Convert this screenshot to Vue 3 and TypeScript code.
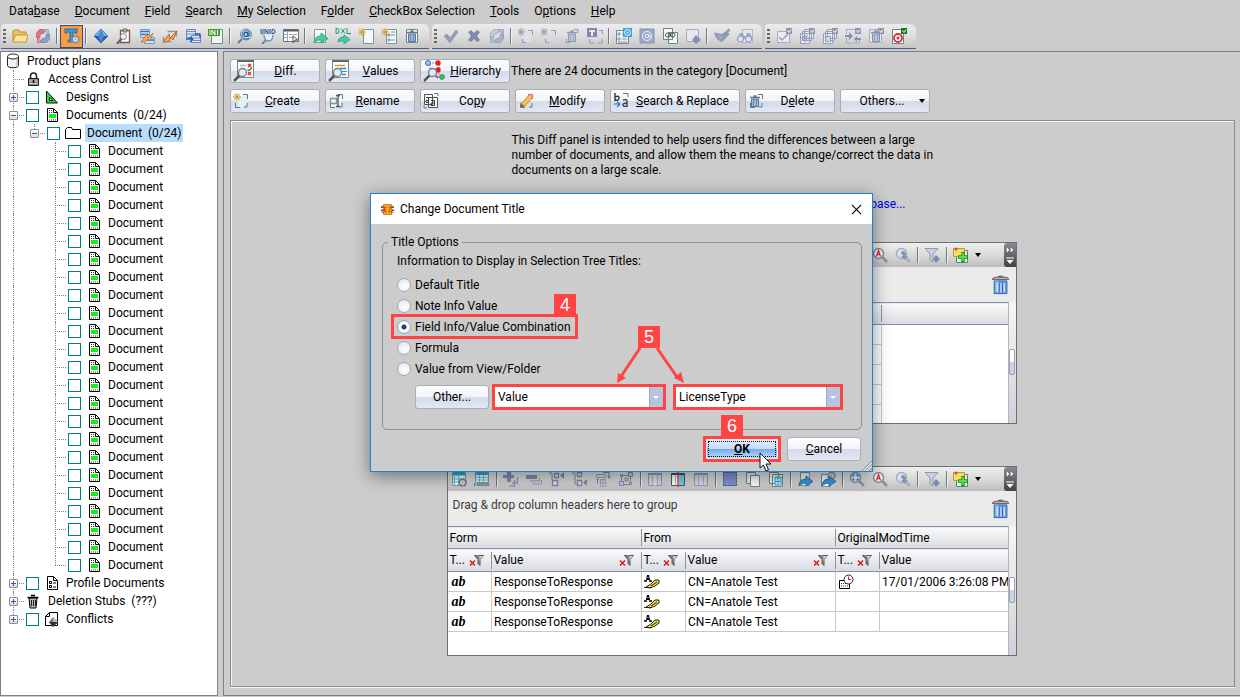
<script setup lang="ts">
import { ref } from 'vue'

type Guide = 'line' | 'blank' | 'tee' | 'end'

interface TreeRow {
  label: string
  icon: string
  guides: Guide[]
  expander?: 'plus' | 'minus'
  checkbox?: boolean
  selected?: boolean
}

interface ActionButton {
  label: string
  icon: string
}

const menus = ['Data&base', '&Document', '&Field', '&Search', '&My Selection', 'F&older', '&CheckBox Selection', '&Tools', 'O&ptions', '&Help']

const toolbars: string[][] = [
  ['folder', 'reload', '|', 'title', '|', 'diamond', 'clipboard', 'editLines', 'editPen', 'transfer', 'iniFile', '|', 'atSearch', 'unid', 'window', '|', 'export', 'dxl', 'newDoc', 'newForm', 'trashDoc'],
  ['check', 'cross', 'reloadOff', '|', 'newOff', 'newOff2', 'trashOff', 'titleOff', '|', 'formAt', 'atOff', 'linkDoc', 'conflictOff', '|', 'broom', 'binoculars'],
  ['checkDoc', 'stackStar', 'stackDash', 'collapseDoc', 'trashCheck', 'target'],
]

const gridTools = ['tableGear', 'tableRow', '|', 'plus', 'minus', 'treeUp', 'treeDown', 'columns', 'nodes', '|', 'cols1', 'cols2', 'cols3', '|', 'selectAll', 'copy', 'copyTable', '|', 'share', 'shareGear', '|', 'zoomFit', 'zoomText', 'zoomNext', '|', 'filter', '|', 'noteAdd']

const firstRow: ActionButton[] = [
  { label: '&Diff.', icon: 'diffBig' },
  { label: '&Values', icon: 'valuesBig' },
  { label: '&Hierarchy', icon: 'hierBig' },
]

const secondRow: ActionButton[] = [
  { label: '&Create', icon: 'create' },
  { label: '&Rename', icon: 'rename' },
  { label: 'Co&py', icon: 'copyText' },
  { label: '&Modify', icon: 'modify' },
  { label: '&Search & Replace', icon: 'replace' },
  { label: 'D&elete', icon: 'deleteDoc' },
]

const tree: TreeRow[] = [
  { label: 'Product plans', icon: 'database', guides: [] },
  { label: 'Access Control List', icon: 'lock', guides: ['tee'] },
  { label: 'Designs', icon: 'design', guides: ['tee'], expander: 'plus', checkbox: true },
  { label: 'Documents  (0/24)', icon: 'document', guides: ['tee'], expander: 'minus', checkbox: true },
  { label: 'Document  (0/24)', icon: 'category', guides: ['line', 'end'], expander: 'minus', checkbox: true, selected: true },
  ...Array.from({ length: 24 }, (_, i): TreeRow => ({
    label: 'Document',
    icon: 'document',
    guides: ['line', 'blank', i === 23 ? 'end' : 'tee'],
    checkbox: true,
  })),
  { label: 'Profile Documents', icon: 'profile', guides: ['tee'], expander: 'plus', checkbox: true },
  { label: 'Deletion Stubs  (???)', icon: 'bin', guides: ['tee'], expander: 'plus' },
  { label: 'Conflicts', icon: 'conflict', guides: ['end'], expander: 'plus', checkbox: true },
]

const rows = [
  { form: 'ResponseToResponse', from: 'CN=Anatole Test', time: '17/01/2006 3:26:08 PM' },
  { form: 'ResponseToResponse', from: 'CN=Anatole Test', time: '' },
  { form: 'ResponseToResponse', from: 'CN=Anatole Test', time: '' },
]

const titleOptions = ['Default Title', 'Note Info Value', 'Field Info/Value Combination', 'Formula', 'Value from View/Folder']
const chosen = ref('Field Info/Value Combination')
const infoKind = ref('Value')
const fieldName = ref('LicenseType')

function mnemonic(label: string): [string, string, string] {
  const at = label.search(/&\S/)
  return at < 0 ? [label, '', ''] : [label.slice(0, at), label[at + 1], label.slice(at + 2)]
}

const off = '#8f99b6'
const page = (stroke: string, fill = '#f4f8f8') =>
  `<path d="M2.500 1.500h11v13h-11z" fill="${fill}" stroke="${stroke}"/>`
const star = (c: string, x = 4, y = 4) =>
  `<path d="M${x} ${y - 4}v8M${x - 4} ${y}h8M${x - 3} ${y - 3}l6 6M${x + 3} ${y - 3}l-6 6" stroke="${c}" stroke-width="1"/>`
const lens = (rim: string, fill = '#e9f1fb') =>
  `<path d="M10 10l5 5" stroke="${rim}" stroke-width="2.500"/><circle cx="6.500" cy="6.500" r="5" fill="${fill}" stroke="${rim}" stroke-width="1.500"/>`
const bin = (c: string, f: string, x = 0, y = 0) =>
  `<g transform="translate(${x} ${y})"><path d="M4.500 6h7v7.500h-7z" fill="${f}" stroke="${c}"/><path d="M3 4.500h10M6.500 3h3" stroke="${c}" stroke-width="1.500"/><path d="M6.500 7v6M9.500 7v6" stroke="${c}" stroke-width=".7"/></g>`
const arrow = (c: string, d: string) =>
  `<path d="M2 15c0-5 3-7 7-7V5l7 5.500L9 15v-3c-3 0-5 1-7 3z" fill="${c}" stroke="${d}" stroke-width=".8"/>`
const badge = (c: string) =>
  `<path d="M10 0h6v6h-6z" fill="${c}"/><path d="M11.500 2.500l1.500 2 2-3" stroke="#fff" fill="none"/>`
const gear = (c: string, x: number, y: number) =>
  `<circle cx="${x}" cy="${y}" r="3" fill="#eef1f5" stroke="${c}" stroke-width="1.300"/><circle cx="${x}" cy="${y}" r="4" fill="none" stroke="${c}" stroke-width="1.300" stroke-dasharray="1.500 1.640"/><circle cx="${x}" cy="${y}" r="1" fill="${c}"/>`
const corners = '<path d="M10 1.500h4.500V6M2.500 10v4.500H7M14 10v4h-3" fill="none" stroke="#5a7c80"/>'
const funnel = (c: string, f: string) =>
  `<path d="M1 1.500h13L9 7v8l-3-2V7z" fill="${f}" stroke="${c}"/>`
const bigLens = '<path d="M1 21l6-6" stroke="#555" stroke-width="2.500"/><circle cx="9.500" cy="12.500" r="4" fill="#dcebfa" fill-opacity=".9" stroke="#777f88" stroke-width="1.300"/>'
const tableCols = (hi: string) =>
  `<path d="M1.500 2.500h13v12h-13z" fill="#d3d8e6" stroke="${off}"/><path d="M1 3h14" stroke="${off}" stroke-width="2"/><path d="M5.500 3v11M10.500 3v11" stroke="#a9b2c9"/>${hi}`

const icons: Record<string, string> = {
  folder: '<path d="M1 13V3l2-1h4l1 2h6v4" fill="#ecc260" stroke="#bd8e31"/><path d="M3.500 7H16l-2 7H1z" fill="#ffe39a" stroke="#c59a3c"/>',
  reload: '<path d="M1.500 9.500V5l3-3.500h4l2 2L8 5.500H6.500L5 7.500v2z" fill="#e27681" stroke="#ad3d4c" stroke-width=".6"/><path d="M8.500 1.500h5v5z" fill="#b7c5db" stroke="#6f89b2" stroke-width=".6"/><path d="M14.500 6.500V11l-3 3.500h-4l-2-2L8 10.500h1.500l1.500-2v-2z" fill="#8ba3c8" stroke="#53719f" stroke-width=".6"/><path d="M7.500 14.500h-5v-5z" fill="#e3949d" stroke="#b5525f" stroke-width=".6"/>',
  title: '<path d="M1 1h12v4h-2V4H9v8h2v2H4v-2h2V4H3v1H1z" fill="#3c9ae2" stroke="#1c619f" stroke-width=".8"/>' + gear('#8491a2', 11.5, 11.5),
  diamond: '<path d="M8 1l7 7H1z" fill="#78b4f0"/><path d="M1 8h14l-7 7z" fill="#2458a8"/><path d="M8 1L5 8l3 7 3-7z" fill="#4e88d2"/><path d="M8 1l7 7-7 7-7-7z" fill="none" stroke="#2a559a" stroke-width=".6"/>',
  clipboard: '<path d="M4.500 2.500h9v12h-9z" fill="#fffaf8" stroke="#7b5550" stroke-width="1.300"/><path d="M7 1h4v3H7z" fill="#b9a7a4" stroke="#775"/><path d="M1 16l5-6" stroke="#665a62" stroke-width="2"/><circle cx="7.500" cy="8.500" r="3" fill="#eaf2fb" stroke="#80878f"/>',
  editLines: '<path d="M1.500 1.500h9v8h-9z" fill="#d8e6f8" stroke="#7b97c4"/><path d="M2 3.500h8M2 6.500h8" stroke="#3e6cb2" stroke-width="1.500"/><path d="M5.500 9.500h10v6h-10z" fill="#cfdff5" stroke="#7b97c4"/><path d="M6 12h9" stroke="#3e6cb2" stroke-width="1.500"/><path d="M2 14l6-8 1 4 5-5-3 8-2-2-3 3z" fill="#f5a84c" stroke="#b06c25" stroke-width=".7"/>',
  editPen: '<path d="M5.500 3.500h9v5M1.500 8.500v5h8" fill="none" stroke="#8895ab" stroke-width="1.300"/><path d="M1 14l6-8 1 4 7-7-4 9-2-2-4 4z" fill="#f5a84c" stroke="#a85516" stroke-width=".8"/>',
  transfer: '<path d="M1.500 1.500h9v8h-9z" fill="#d8e6f8" stroke="#6b87b8"/><path d="M2 3.500h8M2 6h8" stroke="#6a8dc4"/><path d="M6.500 7.500h9v7h-9z" fill="#dfeafa" stroke="#6b87b8"/><path d="M1 11h6M5 9l3 2-3 3M10 6h5v4" stroke="#2257bd" stroke-width="1.300" fill="none"/><path d="M7 10h8M7 12.500h8" stroke="#6a8dc4"/>',
  iniFile: '<path d="M3.500 1.500h11v14h-11z" fill="#eef6f0" stroke="#6f9080"/><path d="M0 1h12v7H0z" fill="#3f9a2c"/><path d="M2 2v5M4 7V2l3 5V2M9.500 2v5" stroke="#fff" fill="none"/>',
  atSearch: '<path d="M1 15l4-4" stroke="#6a7988" stroke-width="2"/><circle cx="9" cy="6.500" r="5.500" fill="#e3eef8" stroke="#5c87b0"/><circle cx="9" cy="6.500" r="2" fill="none" stroke="#1a5294" stroke-width="1.300"/><path d="M11 4v4c1 1 2 0 2-2 0-5-8-4-8 1 0 4 5 5 7 3" fill="none" stroke="#1a5294"/>',
  unid: '<path d="M2 16l4-4" stroke="#6a7988" stroke-width="1.700"/><path d="M4 7c0 8 9 8 9 0" fill="#e4effa" stroke="#6790b6" stroke-width="1.300"/><path d="M1 1v4q0 1 1 1t1-1V1M5 6V1l3 5V1M10 1v5M12 1.500v4h1q2 0 2-2t-2-2z" fill="none" stroke="#175694"/>',
  window: '<path d="M.5 1.500h15v12H.5z" fill="#f8fafc" stroke="#69727e"/><path d="M1 2.500h14" stroke="#57616f" stroke-width="2"/><path d="M4.500 4v9M1 6.500h3M1 9.500h3M6 6.500h8M6 9.500h4" stroke="#a0a9b4"/><path d="M10 8l5 4h-3l-2 3z" fill="#fff" stroke="#555"/>',
  export: page('#8a9a96') + arrow('#46cda8', '#1f9f80'),
  dxl: '<path d="M1 .5v5h1q2 0 2-2.500T2 .5zM6 .5l4 5M10 .5l-4 5M12 0v5.500h4" fill="none" stroke="#169a7c"/><path d="M3 14c0-4 3-5 6-5V7l6 4.500L9 16v-3c-3 0-4 0-6 1z" fill="#46cda8" stroke="#1f9f80" stroke-width=".8"/>',
  newDoc: '<path d="M5.500 1.500h10v14h-10z" fill="#f4fafa" stroke="#7a9894"/>' + star('#d4a017'),
  newForm: '<path d="M5.500 1.500h10v14h-10z" fill="#f4fafa" stroke="#7a9894"/><path d="M7 6h2v2H7zM7 11h2v2H7zM10 7h4M10 12h4M10 4h4" fill="none" stroke="#7d8c9c"/>' + star('#d4a017'),
  trashDoc: page('#688a86') + bin('#5d7493', '#9db8d8'),
  check: '<path d="M1 8l3-2 3 4 6-8 2 2-8 11z" fill="#929dbb" stroke="#8490af" stroke-width=".6"/>',
  cross: '<path d="M2 4l3-2 3 3 3-3 3 2-3 4 3 4-3 2-3-3-3 3-3-2 3-4z" fill="#7f8aa8"/>',
  reloadOff: '<path d="M1.500 9.500V5l3-3.500h4l2 2L8 5.500H6.500L5 7.500v2z" fill="#c3cadb" stroke="#98a4c0" stroke-width=".8"/><path d="M8.500 1.500h6v6zM7.500 14.500h-6v-6z" fill="#b3bcd1" stroke="#98a4c0" stroke-width=".8"/><path d="M14.500 6.500V11l-3 3.500h-4l-2-2L8 10.500h1.500l1.500-2v-2z" fill="#a8b3cc" stroke="#8f9cba" stroke-width=".8"/>',
  newOff: star(off, 3, 4) + '<path d="M10 2.500h4.500V7M4.500 11v3.500H8" fill="none" stroke="#8f99b6"/><path d="M6 5l7 0v9H6z" fill="#dde1ea"/>',
  newOff2: star(off, 3, 4) + '<path d="M10 2.500h4.500V7M4.500 11v3.500H8" fill="none" stroke="#8f99b6"/><path d="M7 7h6v6H7z" fill="#d4d9e5"/>',
  trashOff: '<path d="M10 1.500h4V5M2.500 11v3.500H6" fill="none" stroke="#8f99b6"/>' + bin(off, '#bdc5d8'),
  titleOff: '<path d="M0 0h10v9H0z" fill="#7f8bac"/><path d="M2 3h6M5 3v5" stroke="#fff" stroke-width="1.700"/><path d="M12 2.500h3.500V6M2.500 11v4H7M15 11v4h-4" fill="none" stroke="#8f99b6"/>',
  formAt: '<path d="M.5 2.500h12v13H.5z" fill="#eef2f2" stroke="#7b8790"/><path d="M2 5h2v2H2zM2 10h2v2H2zM6 6h3M6 11h5M2 14h9" stroke="#8a949c" fill="none"/><path d="M7 0h9v9H7z" fill="#3d9fe0"/><circle cx="11.500" cy="4.500" r="3" fill="none" stroke="#fff"/><circle cx="11.500" cy="4.500" r="1" fill="#fff"/>',
  atOff: '<path d="M1 1h14v14H1z" fill="#9ca9cb" stroke="#8490b2"/><circle cx="8" cy="8" r="4.500" fill="none" stroke="#eef1f8"/><circle cx="8" cy="8" r="1.700" fill="none" stroke="#eef1f8"/><path d="M10 6v3h2" stroke="#eef1f8" fill="none"/>',
  linkDoc: '<path d="M1.500.5h9v11h-9zM6.500 4.500h9v11h-9z" fill="#f3f8f7" stroke="#6c8882"/><path d="M3.500 7q0-2 2-2h1q2 0 2 2t-2 2h-1q-2 0-2-2zM8 7q0-2 2-2h1q2 0 2 2t-2 2h-1q-2 0-2-2zM6 7h4" fill="none" stroke="#555" stroke-width="1"/>',
  conflictOff: '<path d="M1.500 1.500h12v12h-12z" fill="#e3e7ef" stroke="#a5adc4"/><path d="M11 7l5 5-5 4-4-4z" fill="#8490ae"/>',
  broom: '<path d="M15.500 1l-3 4" stroke="#929dba" stroke-width="2.500"/><path d="M0 4.500l8 1.500 4-3 3.500 3-2 2.500L8 14C4 13 1 9 0 4.500z" fill="#8f99b6"/><path d="M3 8l5 3M5 7l4 3" stroke="#b5bdd2" stroke-width=".8"/>',
  binoculars: '<path d="M5.500 1.500h10v13h-10z" fill="#e4e8f0" stroke="#adb5ca"/><path d="M3 5h3l1 3h2l1-3h3l3 6H0z" fill="#9ba6c2"/><circle cx="3.500" cy="11" r="3" fill="#dfe4ef" stroke="#8994b4"/><circle cx="11.500" cy="11" r="3" fill="#dfe4ef" stroke="#8994b4"/>',
  checkDoc: '<path d="M1.500 3.500h12v11h-12z" fill="#e8ebf1" stroke="#a5adc4"/><path d="M3 9l3 3 6-6" fill="none" stroke="#95a0bd" stroke-width="1.500"/>' + badge('#8d97ad'),
  stackStar: '<path d="M5.500 1.500h9v9h-9zM3.500 3.500h9v9h-9zM1.500 5.500h9v10h-9z" fill="#e8ebf1" stroke="#949fbb"/>' + star(off, 6, 10) + badge('#8d97ad'),
  stackDash: '<path d="M5.500 1.500h9v9h-9zM3.500 3.500h9v9h-9zM1.500 5.500h9v10h-9z" fill="#e8ebf1" stroke="#949fbb"/><path d="M3.500 8.500h5v5h-5z" fill="#d0d6e4" stroke="#808bab" stroke-dasharray="2 1"/>' + badge('#8d97ad'),
  collapseDoc: '<path d="M1.500 6V1.500h10V6M1.500 10v5h13v-5" fill="none" stroke="#a1abc4"/><path d="M0 7h4V4l4 4-4 4V9H0zM16 10h-4V8l-3 3 3 3v-2h4z" fill="#8490b0"/>' + badge('#8d97ad'),
  trashCheck: '<path d="M1.500 1.500h12v13h-12z" fill="#e4e8f0" stroke="#a5adc4"/>' + bin('#8490b0', '#bdc5d8') + badge('#8d97ad'),
  target: '<path d="M1.500 1.500h11v14h-11z" fill="#f7fafa" stroke="#698883"/><circle cx="7" cy="10" r="4" fill="none" stroke="#d82f3a" stroke-width="1.800"/><circle cx="7" cy="10" r="1.500" fill="#d82f3a"/>' + badge('#0f7a1d'),
  tableGear: '<path d="M1.500 1.500h13v13h-13z" fill="#effafc" stroke="#7a9aa5"/><path d="M2 3h12" stroke="#1fb2d6" stroke-width="3"/><path d="M3.500 5v9M7.500 5v9M2 8h12M2 11h12" stroke="#5cc6de"/>' + gear('#7d8187', 11.5, 11.5),
  tableRow: '<path d="M1.500 1.500h13v10h-13z" fill="#effafc" stroke="#7a9aa5"/><path d="M2 3h12" stroke="#1fb2d6" stroke-width="2"/><path d="M5.500 4v7M9.500 4v7M2 6.500h12M2 9h12" stroke="#5cc6de"/><path d="M3 12.500h12v2H3z" fill="#8b949c" stroke="#68737c" stroke-width=".5"/><path d="M0 12l2 1.500L0 15z" fill="#147ac0"/>',
  plus: '<path d="M4 0h4v4h3v3H8v4H4V7H0V4h4z" fill="#838eac"/><path d="M14.500 6v6H9M11.500 9v6H6" fill="none" stroke="#8f99b6" stroke-width="1.300"/>',
  minus: '<path d="M0 4h11v4H0z" fill="#838eac"/><path d="M13.500 7v3H4M15.500 9v4H6" fill="none" stroke="#8f99b6"/>',
  treeUp: '<path d="M5.500 2.500h4v4h-4zM3.500 9.500h5v5h-5z" fill="#dfe3ec" stroke="#7f8aa9" stroke-width="1.300"/><path d="M0 2h3v7" fill="none" stroke="#7f8aa9"/><path d="M15 1v7l-4-3.500z" fill="#7f8aa9"/>',
  treeDown: '<path d="M5.500 1.500h4v4h-4zM5.500 9.500h4v5h-4z" fill="#dfe3ec" stroke="#7f8aa9" stroke-width="1.300"/><path d="M0 2h3v11h2" fill="none" stroke="#7f8aa9"/><path d="M15 8v7l-4-3.500z" fill="#7f8aa9"/>',
  columns: '<path d="M1.500 3.500h9v3h-9zM5.500 8.500h5v7h-5z" fill="#d3d8e5" stroke="#98a2bd"/><path d="M8 8v7M5 12h6" stroke="#98a2bd"/><path d="M8 1.500h6v5M2.500 8v5" fill="none" stroke="#7f8aa9"/><path d="M12 5h4l-2 3zM1 9l2-2 1 2z" fill="#7f8aa9"/>',
  nodes: '<path d="M3.500 4.500h9v9h-9z" fill="none" stroke="#7f8aa9"/><path d="M10.500 1.500h4v4h-4zM1.500 10.500h4v4h-4zM2.500 3.500h2v2h-2zM11.500 11.500h2v2h-2zM7 7h3v3H7z" fill="#c4cad9" stroke="#7f8aa9"/>',
  cols1: tableCols('<path d="M8 4v11" stroke="#fff" stroke-dasharray="1 1"/>'),
  cols2: '<path d="M1.500 2.500h13v12h-13z" fill="#fff" stroke="#4d5965"/><path d="M1 2h14v2H1z" fill="#44515d"/><path d="M9 4h5v10H9z" fill="#70d1ee"/><path d="M5.500 4v10" stroke="#b7c2c9"/><path d="M8 1v15" stroke="#e02626" stroke-width="1.300"/>',
  cols3: tableCols(''),
  selectAll: '<path d="M1.500 1.500h13v13h-13z" fill="#7f93cf" stroke="#35488f" stroke-dasharray="2 1"/>',
  copy: '<path d="M1.500 1.500h9v11h-9z" fill="#e0f0e8" stroke="#6b8880"/><path d="M5.500 4.500h9v11h-9z" fill="#f8fbfa" stroke="#6b8880"/>',
  copyTable: '<path d="M1.500 1.500h9v11h-9zM4.500 3.500h10v12h-10z" fill="#f3fbf8" stroke="#6b8880"/><path d="M7 6h6v8H7z" fill="#e4fafd" stroke="#25a6cc"/><path d="M7 7h6M10 7v7M7 10.500h6" stroke="#25a6cc"/>',
  share: '<path d="M3.500 1.500h9v13h-9z" fill="#f5f8f8" stroke="#7a9894"/>' + arrow('#3a95dc', '#1d5f9e'),
  shareGear: '<path d="M1.500 3.500h9v12h-9z" fill="#f5f8f8" stroke="#7a9894"/>' + gear('#8a8f95', 11.5, 4.5) + arrow('#3a95dc', '#1d5f9e'),
  zoomFit: lens('#8793a6') + '<path d="M4 6V4h2M7 4h2v2M4 7v2h2M9 7v2H7" fill="none" stroke="#2557d0" stroke-width="1"/>',
  zoomText: lens('#8a8f98') + '<path d="M4.500 9.500l2-6 2 6M5 7.500h3" fill="none" stroke="#d6263a" stroke-width="1.200"/>',
  zoomNext: lens('#a5aec4', '#dbe1ee') + '<path d="M7 4c3 0 4 2 4 5h2l-3.500 4L6 9h2q0-2-2-2z" fill="#8591b3"/>',
  filter: funnel('#8f99b6', '#c7cede') + '<path d="M12 8l4 4-4 4-3-4z" fill="#7f8aa9"/>',
  noteAdd: '<path d="M3.500 3.500h11v12h-11z" fill="#e8f0ea" stroke="#6b7a70"/><path d="M.5 1.500h11v8H.5z" fill="#f8dc5c" stroke="#b89b3a"/><circle cx="3" cy="2" r="1.500" fill="#e0423a"/><path d="M10 5v10M5 10h10" stroke="#1c8d20" stroke-width="3.500"/><path d="M10 6v8M6 10h8" stroke="#57e04d" stroke-width="1.800"/>',
  create: '<path d="M5 3h9v12H5z" fill="#e2f1f1"/>' + corners + star('#c8961a'),
  rename: '<path d="M5 1h8v14H3V3z" fill="#eef5f5"/>' + corners + '<path d="M2.500 5.500h6v5h-6z" fill="#f2f2f2" stroke="#8a9298" stroke-width="1.300"/><path d="M10 2.500v11M8 2.500h4M8 13.500h4" stroke="#50585e" stroke-width="1.300"/>',
  copyText: '<path d="M1.500 1.500h8v10h-8zM5.500 4.500h9v10h-9z" fill="#f8faf9" stroke="#4b5356"/><path d="M3 4.500h2.500v5H3v-2h2M8 7.500h3.500v5H8v-2.500h3" fill="none" stroke="#30383a"/><path d="M11 .5h4V3M1 12v3h3" fill="none" stroke="#5a7c80"/>',
  modify: corners + '<path d="M4 10l8-9 3 3-8 9-4 1z" fill="#fbc04c" stroke="#bf7b20" stroke-width=".8"/><path d="M11 2l3 3 2-2-3-3z" fill="#e89090"/><path d="M3 14l1-3 2 2z" fill="#684825"/>',
  replace: '<path d="M10 .5h5V4" fill="none" stroke="#5a7c80"/><path d="M2 0v8M2 4q4-2 4 1t-4 2" stroke="#333" stroke-width="1.400" fill="none"/><path d="M10 7q4-1 4 1v6M14 10q-4 0-4 2t4 1" stroke="#444" stroke-width="1.400" fill="none"/><path d="M1 11h6M4 9l3 2-3 3" stroke="#2d6fd8" fill="none" stroke-width="1.200"/>',
  deleteDoc: corners + bin('#5d7493', '#9db8d8', -1, 0),
  diffBig: '<path d="M4.500.5h16v17h-16z" fill="#f8f8f4" stroke="#7f8a84"/><path d="M4 1h17" stroke="#636b66" stroke-width="2"/><path d="M7 5.500h6M7 9.500h6M10 13.500h4" stroke="#b9bcb8" stroke-width="1.500"/><path d="M15 4l3 3M18 4l-3 3M15 12l3 3M18 12l-3 3" stroke="#e5232b" stroke-width="1.200"/><path d="M14.500 9.500l1.500 1 3-3" fill="none" stroke="#1a8d36" stroke-width="1.200"/>' + bigLens,
  valuesBig: '<path d="M4.500.5h16v17h-16z" fill="#fafbfb" stroke="#7f8a84"/><path d="M4 1h17" stroke="#636b66" stroke-width="2"/><path d="M7 5.500h10" stroke="#df8a2b" stroke-width="1.300"/><path d="M12 8.500h6M14 14.500h4" stroke="#3c84cf" stroke-width="1.300"/><path d="M14 11.500h5" stroke="#2a9bc0"/>' + bigLens,
  hierBig: '<path d="M6 3h10M7 4v12M16 4v14" stroke="#8b8f9c" stroke-dasharray="2 1"/><circle cx="5" cy="3" r="2.500" fill="#9ec2ff" stroke="#3f62ba"/><circle cx="15" cy="3" r="2.700" fill="#f01818"/><circle cx="15" cy="10" r="2.700" fill="#f01818"/><path d="M12 15l3 3" stroke="#d43ad0" stroke-width="2"/><circle cx="19" cy="17" r="2.300" fill="#42c45b" stroke="#1f8a37"/>' + bigLens,
  database: '<path d="M2.500 3.500v9c0 3 11 3 11 0v-9" fill="#f2f2f2" stroke="#222"/><ellipse cx="8" cy="3.500" rx="5.500" ry="2.500" fill="#fff" stroke="#222"/><path d="M12 6v8" stroke="#aaa"/>',
  lock: '<path d="M4.500 8V5q0-3 3-3t3 3v3" fill="none" stroke="#222" stroke-width="1.500"/><path d="M2.500 7.500h10v7h-10z" fill="#8c8c8c" stroke="#1c1c1c"/><path d="M3 10h9M3 12.500h9" stroke="#c8c8c8"/><path d="M7.500 9v3" stroke="#000" stroke-width="1.500"/>',
  design: '<path d="M2.500 2v12h11z" fill="#19e52a" stroke="#111"/><path d="M5.500 8v3.500h3.500z" fill="#fff" stroke="#111"/>',
  document: '<path d="M3.500 1.500h6l4 4v9h-10z" fill="#fff" stroke="#000" stroke-width="1"/><path d="M9.500 2v3.500H13" fill="none" stroke="#000"/><path d="M5 3.500h3M5 5.500h3M5 13h7" stroke="#333" stroke-dasharray="1 1"/><path d="M5 7h7v4H5z" fill="#0bf216"/>',
  category: '<path d="M.5 13.500v-9l2-2h4l1 2h8v9z" fill="#fff" stroke="#000"/>',
  profile: '<path d="M3.500 1.500h6l4 4v9h-10z" fill="#fff" stroke="#000" stroke-width="1"/><path d="M9.500 2v3.500H13M5.500 6.500h2v2h-2zM5.500 10.500h2v2h-2zM9 8h3M9 12h3" fill="none" stroke="#000"/>',
  bin: '<path d="M3 5h8l-1 10H4z" fill="#b5b5b5" stroke="#000"/><path d="M1.500 4.500h11M5 2.500h4" stroke="#000" stroke-width="1.500"/><path d="M5.500 7v6M7.500 7v6M9.500 7v6" stroke="#222"/>',
  conflict: '<path d="M5.500 1.500h8v13h-12v-9z" fill="#fff" stroke="#000"/><path d="M1.500 5.500h4v-4" fill="none" stroke="#000"/><path d="M9 6l5 5-5 5-4-5z" fill="#777"/><path d="M9 6v5h5z" fill="#bbb"/><path d="M5 11h9l-5 5z" fill="#333"/>',
  trashBig: '<path d="M3.500 6.500h14v14h-14z" fill="#5f9ddf" stroke="#2f5fa2"/><path d="M5 7h3v12H5z" fill="#a5cbf2"/><path d="M7.500 9v10M11 9v10M14.500 9v10" stroke="#d8eafc" stroke-width="1.500"/><path d="M9 9v10M12.500 9v10" stroke="#2d62ad"/><path d="M1.500 5q0-2 3-2.500h12q3 .5 3 2.500z" fill="#b5b5b5" stroke="#5e5e5e"/><path d="M7.500 2q3-1.500 6 0" fill="none" stroke="#666" stroke-width="1.500"/>',
  filterOff: '<path d="M5.500 3.500h9l-3.500 4v6l-2-2v-4z" fill="#7d7d7d" stroke="#555"/><path d="M6 3.500h4l1 8V7l3-3z" fill="#d5d5d5"/><path d="M1 8.500l5 5M6 8.500l-5 5" stroke="#e0161c" stroke-width="1.500"/>',
  author: '<path d="M2 6l1-5h2l1 5z" fill="#000"/><path d="M0 7h3M5 7h3" stroke="#000" stroke-width="1.500"/><path d="M3.500 3.500h1" stroke="#fff"/><path d="M2 13l5-3 4-4h4v3l-4 3-5 2z" fill="#f3e32a" stroke="#222"/><path d="M0 13.500h8M7 12l6-4" stroke="#222"/>',
  clock: '<path d="M1.500 6.500h10v8h-10z" fill="#fff" stroke="#000"/><path d="M3 9.500h7M3 12h7" stroke="#333" stroke-dasharray="1 1"/><circle cx="10.500" cy="5.500" r="4.500" fill="#fff" stroke="#222"/><path d="M10.500 2.500v3H13" fill="none" stroke="#d81a1a"/>',
  app: '<path d="M0 4h16v2H0zM0 8h16v2H0zM1 11h14v1H1z" fill="#555"/><path d="M3 2h10v12H3z" fill="#f6c21c" stroke="#c0502c"/><path d="M4.500 5h3M4.500 5v6h3M4.500 8h2M9 5h3l-3 6h3.500" fill="none" stroke="#e02a1c" stroke-width="1.200"/>',
}
</script>

<template>
  <div class="app">
    <nav class="menu-bar" aria-label="Main menu">
      <button v-for="m in menus" :key="m" type="button" class="menu">{{ mnemonic(m)[0] }}<u>{{ mnemonic(m)[1] }}</u>{{ mnemonic(m)[2] }}</button>
    </nav>

    <div class="toolbars">
      <div v-for="(bar, b) in toolbars" :key="b" class="toolbar" role="toolbar">
        <span class="grip"></span>
        <template v-for="(name, i) in bar" :key="i">
          <span v-if="name === '|'" class="sep"></span>
          <button v-else type="button" class="tool" :class="{ active: name === 'title' }" :aria-label="name">
            <svg class="ic" viewBox="0 0 16 16" fill="none" v-html="icons[name]"></svg>
          </button>
        </template>
      </div>
    </div>

    <main class="work">
      <ul class="tree">
        <li v-for="(row, i) in tree" :key="i" class="node">
          <span v-for="(g, k) in row.guides" :key="k" class="guide" :class="g">
            <button v-if="row.expander && k === row.guides.length - 1" type="button" class="expander" :class="row.expander" :aria-label="'Toggle ' + row.label"></button>
          </span>
          <input v-if="row.checkbox" type="checkbox" class="tick" :aria-label="row.label">
          <span class="node-icon" :class="{ lead: !row.checkbox }"><svg class="ic" viewBox="0 0 16 16" fill="none" v-html="icons[row.icon]"></svg></span>
          <span class="node-text" :class="{ selected: row.selected }">{{ row.label }}</span>
        </li>
      </ul>

      <section class="content">
        <div class="actions">
          <button v-for="a in firstRow" :key="a.label" type="button" class="btn action">
            <svg class="ic big" viewBox="0 0 22 22" fill="none" v-html="icons[a.icon]"></svg>
            <span class="cap">{{ mnemonic(a.label)[0] }}<u>{{ mnemonic(a.label)[1] }}</u>{{ mnemonic(a.label)[2] }}</span>
          </button>
          <span class="summary">There are 24 documents in the category [Document]</span>
        </div>
        <div class="actions">
          <button v-for="a in secondRow" :key="a.label" type="button" class="btn action" :class="{ long: a.icon === 'replace' }">
            <svg class="ic" viewBox="0 0 16 16" fill="none" v-html="icons[a.icon]"></svg>
            <span class="cap">{{ mnemonic(a.label)[0] }}<u>{{ mnemonic(a.label)[1] }}</u>{{ mnemonic(a.label)[2] }}</span>
          </button>
          <button type="button" class="btn action others"><span class="cap">Others...</span><span class="caret"></span></button>
        </div>

        <div class="panel">
          <div class="column">
            <p class="intro">This Diff panel is intended to help users find the differences between a large number of documents, and allow them the means to change/correct the data in documents on a large scale.</p>
            <a href="#" class="link">base...</a>

            <div v-for="n in 2" :key="n" class="grid-box" :class="n === 1 ? 'upper' : 'lower'">
              <div class="grid-tools" role="toolbar">
                <template v-for="(name, i) in gridTools" :key="i">
                  <span v-if="name === '|'" class="sep"></span>
                  <button v-else type="button" class="tool" :aria-label="name">
                    <svg class="ic" viewBox="0 0 16 16" fill="none" v-html="icons[name]"></svg>
                  </button>
                </template>
                <span class="caret"></span>
                <button type="button" class="more" aria-label="More tools">
                  <svg class="more-ic" viewBox="0 0 12 24" fill="none"><path d="M3 5l2 2-2 2zM7 5l2 2-2 2z" fill="#fff" stroke="#fff" stroke-width=".5" /><path d="M2 15h8" stroke="#fff" /><path d="M2.500 17h7L6 21z" fill="#fff" /></svg>
                </button>
              </div>
              <div class="group-zone">
                <span v-if="n === 2">Drag &amp; drop column headers here to group</span>
                <svg class="trash" viewBox="0 0 22 22" fill="none" v-html="icons.trashBig"></svg>
              </div>
              <div class="grid-body">
                <table v-if="n === 1" class="grid">
                  <colgroup><col class="c-main"><col></colgroup>
                  <thead><tr><th></th><th></th></tr></thead>
                  <tbody><tr v-for="r in 5" :key="r"><td></td><td class="open"></td></tr></tbody>
                </table>
                <table v-else class="grid">
                  <colgroup><col class="c-type"><col class="c-value"><col class="c-type"><col class="c-value"><col class="c-type"><col></colgroup>
                  <thead>
                    <tr><th colspan="2">Form</th><th colspan="2">From</th><th colspan="2">OriginalModTime</th></tr>
                    <tr class="sub">
                      <template v-for="p in 3" :key="p">
                        <th><span class="th">T...<svg class="ic" viewBox="0 0 16 16" fill="none" v-html="icons.filterOff"></svg></span></th>
                        <th><span class="th">Value<svg v-if="p < 3" class="ic" viewBox="0 0 16 16" fill="none" v-html="icons.filterOff"></svg></span></th>
                      </template>
                    </tr>
                  </thead>
                  <tbody>
                    <tr v-for="(r, i) in rows" :key="i">
                      <td><span class="ab">ab</span></td>
                      <td>{{ r.form }}</td>
                      <td><svg class="ic" viewBox="0 0 16 16" fill="none" v-html="icons.author"></svg></td>
                      <td>{{ r.from }}</td>
                      <td><svg v-if="r.time" class="ic" viewBox="0 0 16 16" fill="none" v-html="icons.clock"></svg></td>
                      <td>{{ r.time }}</td>
                    </tr>
                  </tbody>
                </table>
                <div class="scroll"><span class="thumb"></span></div>
              </div>
            </div>
          </div>
        </div>
      </section>
    </main>

    <div class="dialog" role="dialog" aria-labelledby="dlg-title">
      <header class="dlg-head">
        <svg class="app-ic" viewBox="0 0 16 16" fill="none" v-html="icons.app"></svg>
        <span id="dlg-title">Change Document Title</span>
        <button type="button" class="close" aria-label="Close">
          <svg class="close-ic" viewBox="0 0 12 12" fill="none"><path d="M1 1l10 10M11 1L1 11" stroke="#000" stroke-width="1.200" /></svg>
        </button>
      </header>
      <div class="dlg-body">
        <fieldset class="group">
          <legend>Title Options</legend>
          <p class="hint">Information to Display in Selection Tree Titles:</p>
          <label v-for="o in titleOptions" :key="o" class="radio" :class="{ marked: o === 'Field Info/Value Combination' }">
            <input v-model="chosen" type="radio" name="title-option" :value="o">{{ o }}
          </label>
          <div class="pickers">
            <button type="button" class="btn other">Other...</button>
            <span class="combo"><select v-model="infoKind" aria-label="Information"><option>Value</option></select></span>
            <span class="combo second"><select v-model="fieldName" aria-label="Field"><option>LicenseType</option></select></span>
          </div>
        </fieldset>
        <div class="dlg-actions">
          <span class="ok-mark"><button type="button" class="btn ok"><u>O</u>K</button></span>
          <button type="button" class="btn cancel"><u>C</u>ancel</button>
        </div>
      </div>
      <span class="step four">4</span>
      <span class="step five">5</span>
      <span class="step six">6</span>
      <svg class="arrows" viewBox="0 0 80 40" fill="none">
        <path d="M29 1L9 31M46 1l20 29" stroke="#ff4444" stroke-width="3" />
        <path d="M6 36l1-10 8 5zM73 36l-10-5 7-6z" fill="#ff4444" />
      </svg>
      <svg class="resize" viewBox="0 0 12 12" fill="none"><path d="M1 12L12 1M5 12l7-7M9 12l3-3" stroke="#666" /><path d="M2 12L12 2M6 12l6-6" stroke="#fff" /></svg>
      <svg class="pointer" viewBox="0 0 13 20" fill="none"><path d="M1 1v15l3.500-3 2.500 6 2.500-1-2.500-6H12z" fill="#fff" stroke="#111" /></svg>
    </div>
  </div>
</template>

<style>
body {
  margin: 0;
  background: #cccccc;
}
</style>

<style scoped>
.app {
  position: relative;
  box-sizing: border-box;
  display: flex;
  flex-direction: column;
  min-height: 100vh;
  overflow: hidden;
  background: #cccccc;
  color: #000;
  font: 12px/16px Roboto, "Open Sans", sans-serif;
}
.app *, .app *::before, .app *::after { box-sizing: border-box; }
button, select, input { font: inherit; color: inherit; margin: 0; }
button { padding: 0; border: 0; background: none; }
u { text-underline-offset: 1px; }
.ic { flex: none; display: block; width: 16px; height: 16px; }
.menu-bar { display: flex; gap: 15px; height: 23px; padding: 0 9px 1px; }
.menu { white-space: nowrap; }
.toolbars { display: flex; gap: 3px; height: 28px; padding: 1px 1px 0; }
.toolbar {
  display: flex;
  align-items: center;
  height: 25px;
  padding: 0 6px 0 2px;
  border-bottom: 1px solid #476088;
  border-radius: 4px 6px 0 0;
  background: linear-gradient(#ececec, #dddddd 50%, #c6c6c6);
}
.grip { width: 3px; height: 15px; margin-right: 2px; background: repeating-linear-gradient(#666 0 2px, transparent 2px 4px); }
.tool { display: flex; flex: none; align-items: center; justify-content: center; width: 23px; height: 23px; }
.tool.active { border: 1px solid #3d4c78; background: #fb9d3e; }
.sep { flex: none; width: 2px; height: 16px; margin: 0 2px; border-left: 1px solid #6d7787; border-right: 1px solid #f2f2f2; }
.work { display: flex; flex: 1; gap: 5px; padding-bottom: 1px; }
.tree {
  flex: none;
  width: 218px;
  margin: 0;
  padding: 0 0 0 2px;
  border: 1px solid #808080;
  background: #fff;
  list-style: none;
}
.node { display: flex; align-items: center; height: 18px; }
.guide { position: relative; flex: none; width: 21px; height: 18px; }
.guide.line::before, .guide.tee::before, .guide.end::before {
  content: "";
  position: absolute;
  left: 10px;
  top: 0;
  bottom: 0;
  border-left: 1px dotted #888;
}
.guide.end::before { bottom: 9px; }
.guide.tee::after, .guide.end::after {
  content: "";
  position: absolute;
  left: 10px;
  right: 0;
  top: 9px;
  border-top: 1px dotted #888;
}
.expander {
  position: absolute;
  z-index: 1;
  left: 6px;
  top: 5px;
  width: 9px;
  height: 9px;
  border: 1px solid #8e8f8f;
  border-radius: 1px;
  background: linear-gradient(#3c5ca8, #3c5ca8) center / 5px 1px no-repeat, linear-gradient(#fff, #ddd);
}
.expander.plus { background: linear-gradient(#3c5ca8, #3c5ca8) center / 5px 1px no-repeat, linear-gradient(#3c5ca8, #3c5ca8) center / 1px 5px no-repeat, linear-gradient(#fff, #ddd); }
.tick { flex: none; appearance: none; width: 13px; height: 13px; margin-left: 2px; border: 1px solid #008080; background: #fff; }
.node-icon { flex: none; width: 16px; margin: 0 4px 0 5px; }
.node-icon.lead { margin: 0 4px 0 2px; }
.node-text { height: 18px; padding: 0 2px; line-height: 18px; white-space: pre; }
.node-text.selected { background: #b8dcfb; }
.content {
  display: flex;
  flex: 1;
  flex-direction: column;
  min-width: 0;
  padding: 7px 5px 8px 6px;
  border: solid #808080;
  border-width: 1px 0 1px 1px;
}
.actions { display: flex; gap: 5px; margin-bottom: 6px; }
.btn {
  display: flex;
  align-items: center;
  justify-content: center;
  height: 24px;
  border: 1px solid #a9adb8;
  border-radius: 3px;
  background: linear-gradient(#fdfdfe, #f1f4f9 48%, #d3dae9 50%, #e2e8f3);
}
.action { width: 90px; padding: 0 3px 0 2px; justify-content: flex-start; }
.action.long { width: 130px; }
.cap { flex: 1; text-align: center; white-space: nowrap; }
.big { width: 22px; height: 22px; }
.others { padding: 0 4px; }
.summary { align-self: center; margin-left: -4px; }
.caret { flex: none; width: 0; height: 0; border: 3px solid transparent; border-top: 4px solid #000; border-bottom: 0; }
.panel {
  display: flex;
  flex: 1;
  justify-content: center;
  margin-top: 1px;
  padding-right: 2px;
  border: 1px solid #8c8c8c;
  box-shadow: inset 1px 1px #f4f4f4, 0 1px #f4f4f4;
}
.column { display: flex; flex-direction: column; width: 570px; max-width: 100%; padding-top: 12px; }
.intro { margin: 0; padding: 0 70px 0 65px; line-height: 15px; }
.link { align-self: flex-end; margin: 18px 111px 30px 0; color: #0000e0; text-decoration: none; }
.grid-box { display: flex; flex-direction: column; border: 1px solid #6f6f6f; background: #fff; }
.upper { height: 182px; margin-bottom: 42px; }
.lower { height: 190px; }
.grid-tools { display: flex; flex: none; align-items: center; height: 24px; background: linear-gradient(#efefef, #d9d9d9 50%, #bdbdbd); }
.grid-tools .caret { margin-left: 2px; }
.more { width: 12px; height: 24px; margin-left: auto; border-radius: 3px 0 0 3px; background: linear-gradient(#8a8d93, #3f4247); }
.more-ic { display: block; width: 12px; height: 24px; }
.group-zone { display: flex; flex: none; align-items: center; height: 35px; padding: 0 5px; background: #ebebeb; color: #3c3c3c; }
.group-zone span { padding-bottom: 7px; }
.trash { width: 20px; height: 20px; margin-left: auto; }
.grid-body { display: flex; flex: 1; min-height: 0; overflow: hidden; }
.grid { flex: 1; align-self: flex-start; width: 100%; table-layout: fixed; border-collapse: collapse; }
.c-type { width: 44px; }
.c-value { width: 150px; }
.c-main { width: 434px; }
.grid th {
  height: 22px;
  padding: 0 2px;
  border: solid #8490a8;
  border-width: 1px 0;
  background: linear-gradient(#8c93a0, #8c93a0) right center / 1px 17px no-repeat, linear-gradient(#fafafb, #e6e7ea 60%, #d9dbe0);
  font-weight: 400;
  text-align: left;
}
.grid .sub th { height: 23px; }
.grid th:last-child { background: linear-gradient(#fafafb, #e6e7ea 60%, #d9dbe0); }
.th { display: flex; align-items: center; justify-content: space-between; padding-right: 5px; }
.grid td { height: 20px; padding: 0 2px; border: solid #c8c8c8; border-width: 0 1px 1px 0; line-height: 16px; white-space: nowrap; }
.grid td:last-child { padding-right: 0; border-right: 0; }
.grid td.open { border-bottom: 0; }
.ab { padding-left: 2px; font: italic bold 14px/16px "Liberation Serif", serif; }
.scroll { flex: none; position: relative; width: 8px; border-left: 1px solid #b5b5b5; background: linear-gradient(#f6f6f6, #cfd2d9); }
.thumb { position: absolute; left: 0; top: 47px; width: 6px; height: 26px; border: 1px solid #9aa0ae; border-radius: 2px; background: linear-gradient(#fff 50%, #c9d3ea 50%); }
.lower .thumb { top: 51px; }

.dialog {
  position: absolute;
  left: 370px;
  top: 193px;
  width: 503px;
  border: 1px solid #1883d7;
  background: #cccccc;
  box-shadow: 0 4px 16px rgba(0, 0, 0, .45);
}
.dlg-head { display: flex; align-items: center; gap: 6px; height: 30px; padding: 0 10px; background: #fff; }
.app-ic { width: 13px; height: 13px; }
.close { margin-left: auto; }
.close-ic { display: block; width: 11px; height: 11px; }
.dlg-body { padding: 10px 10px 9px 11px; }
.group { height: 196px; margin: 0; padding: 0 14px; border: 1px solid #8f8f8f; border-radius: 5px; }
.group legend { margin-left: -9px; padding: 0 3px; }
.hint { margin: 3px 0 5px; }
.radio { display: flex; align-items: center; gap: 4px; width: fit-content; height: 21px; white-space: nowrap; }
.radio input {
  appearance: none;
  width: 14px;
  height: 14px;
  border: 1px solid #9fa8ba;
  border-radius: 50%;
  background: radial-gradient(circle at 60% 65%, #fff, #dbe3ef);
}
.radio input:checked { background: radial-gradient(circle, #1f3c6c 0 2px, #fff 3px, #d5deed); }
.radio.marked { margin-left: -4px; padding: 0 5px 0 4px; outline: 3px solid #ff4444; outline-offset: -1px; }
.pickers { display: flex; align-items: center; margin: 6px 0 0 18px; }
.other { width: 74px; }
.combo { position: relative; width: 168px; height: 20px; margin-left: 6px; outline: 3px solid #ff4444; background: #fff; }
.combo.second { width: 164px; margin-left: 13px; }
.combo::after { content: ""; position: absolute; right: 0; top: 0; width: 14px; height: 20px; border-left: 1px solid #9aa8cc; background: #b8c3df; pointer-events: none; }
.combo::before { content: ""; position: absolute; z-index: 1; right: 4px; top: 9px; border: 3px solid transparent; border-top-color: #fff; border-bottom: 0; pointer-events: none; }
.combo select { display: block; appearance: none; width: 100%; height: 20px; padding: 0 16px 0 3px; border: 0; border-radius: 0; background: transparent; line-height: 20px; }
.dlg-actions { display: flex; align-items: center; justify-content: flex-end; gap: 6px; margin-top: 6px; padding-right: 1px; }
.ok-mark { padding: 3px; background: #ff4444; }
.ok { width: 72px; height: 20px; border-radius: 0; border-color: #e8eefa; outline: 1px dotted #111; outline-offset: -3px; background: linear-gradient(#e4edfb, #c8dbf6 48%, #75a8e8 50%, #b4dcfa); font-weight: 700; }
.cancel { width: 74px; }
.step {
  position: absolute;
  width: 22px;
  height: 22px;
  background: #ff4444;
  color: #fff;
  font: 18px/22px "Liberation Sans", Arial, sans-serif;
  text-align: center;
}
.four { left: 183px; top: 100px; }
.five { left: 267px; top: 132px; }
.six { left: 350px; top: 221px; }
.arrows { position: absolute; left: 240px; top: 153px; width: 80px; height: 40px; }
.resize { position: absolute; right: 0; bottom: 0; width: 11px; height: 11px; }
.pointer { position: absolute; left: 388px; top: 258px; width: 13px; height: 20px; }
</style>
